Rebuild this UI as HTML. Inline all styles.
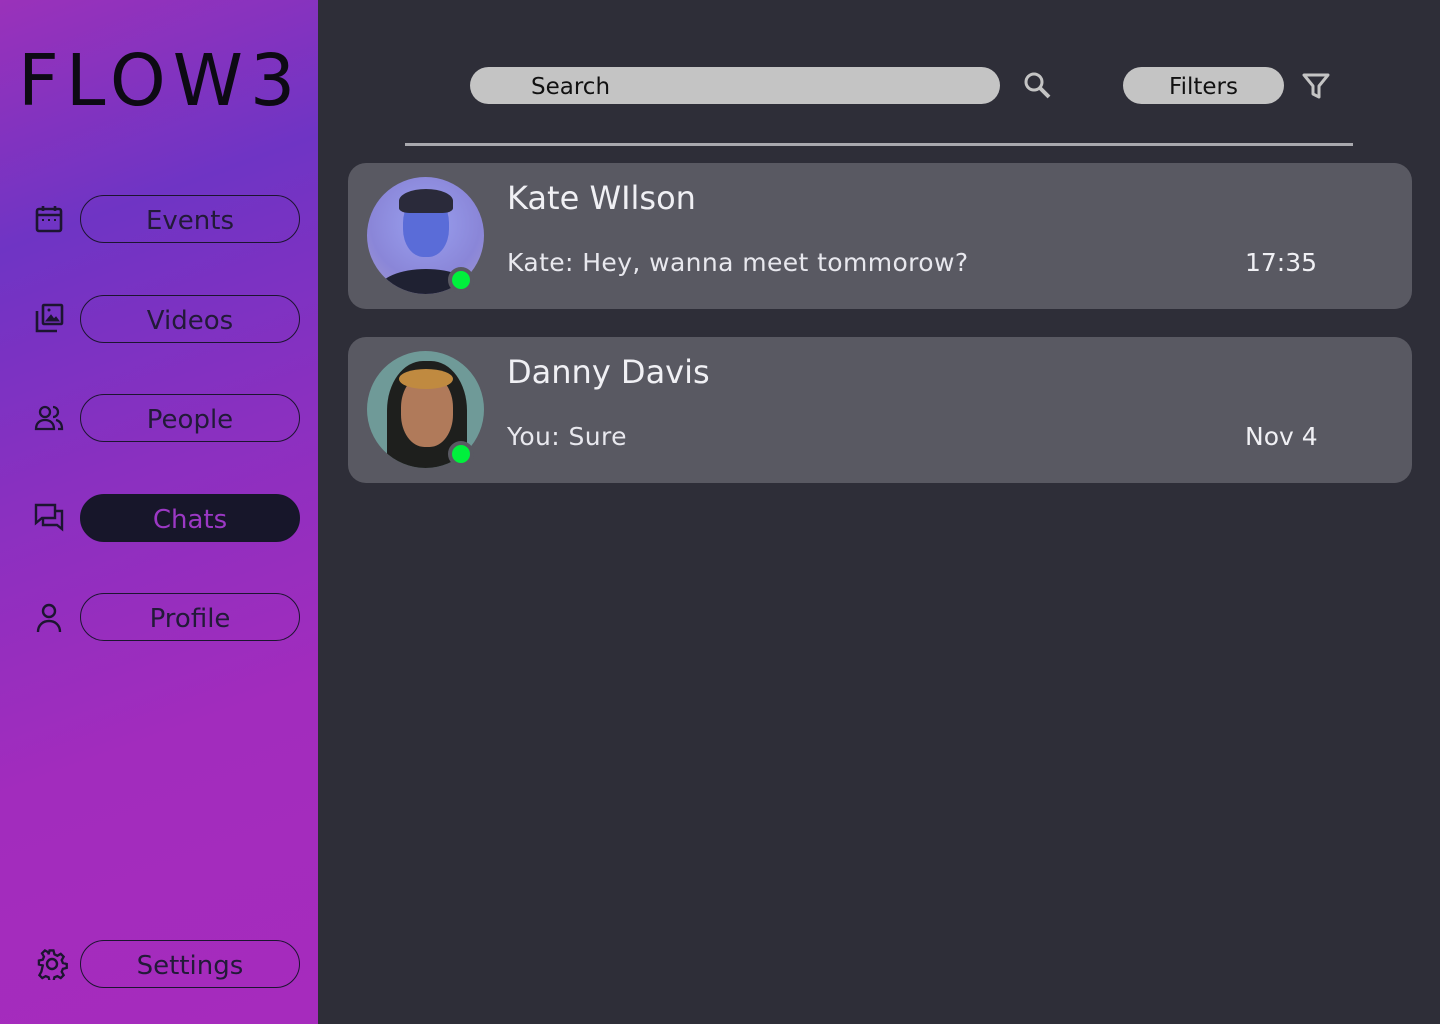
<!DOCTYPE html>
<html><head><style>
*{margin:0;padding:0;box-sizing:border-box}
body{width:1440px;height:1024px;background:#2e2e38;font-family:"DejaVu Sans","Liberation Sans",sans-serif;position:relative;overflow:hidden}
.side{position:absolute;left:0;top:0;width:318px;height:1024px;background:linear-gradient(160deg,#9a32ba 0%,#6f34c4 22%,#8a30c0 45%,#a22cbd 70%,#a62bbd 100%)}
.logo{position:absolute;left:18px;top:45px;font-size:71px;font-family:"DejaVu Sans",sans-serif;color:#0d0a14;letter-spacing:7px;line-height:1}
.btn{position:absolute;left:80px;width:220px;height:48px;border:1.5px solid #1c1530;border-radius:24px;text-align:center;line-height:50px;font-size:26px;color:#221a38}
.btn.on{background:#17162a;color:#9b38c4;border-color:#17162a}
.ic{position:absolute;left:33px;width:32px;height:32px}
.pill{position:absolute;top:67px;height:37px;background:#c4c4c4;border-radius:19px;font-size:23px;color:#111;line-height:40px}
.card{position:absolute;left:348px;width:1064px;height:146px;background:#595962;border-radius:18px}
.av{position:absolute;left:19px;top:14px;width:117px;height:117px;border-radius:50%;overflow:hidden}
.dot{position:absolute;left:100px;top:104px;width:26px;height:26px;border-radius:50%;background:#00f03c;border:4px solid #595962}
.nm{position:absolute;left:159px;top:16px;font-size:32px;color:#f0f0f4}
.msg{position:absolute;left:159px;top:85px;font-size:25px;color:#e8e8ee;letter-spacing:0.4px}
.tm{position:absolute;left:897px;top:85px;font-size:25px;color:#f0f0f4}
</style></head><body>
<div class="side">
<div class="logo">FLOW3</div>
<svg class="ic" style="top:203px" viewBox="0 0 32 32" fill="none" stroke="#1c1530" stroke-width="2.6"><rect x="4" y="6" width="24" height="22" rx="2"/><path d="M4 12h24M10 3v5M22 3v5"/><path d="M9 17h2M15 17h2M21 17h2" stroke-width="2"/></svg>
<div class="btn" style="top:195px">Events</div>
<svg class="ic" style="top:302px" viewBox="0 0 32 32" fill="none" stroke="#1c1530" stroke-width="2.6"><rect x="10" y="3" width="19" height="19" rx="1"/><path d="M4 9v20h20"/><path d="M13 19l5-6 3 4 2-2 3 4z" fill="#1c1530" stroke-width="1"/><circle cx="16" cy="8" r="1.5" fill="#1c1530" stroke="none"/></svg>
<div class="btn" style="top:295px">Videos</div>
<svg class="ic" style="top:402px" viewBox="0 0 32 32" fill="none" stroke="#1c1530" stroke-width="2.3"><circle cx="12" cy="10" r="5"/><path d="M3 27c0-6 4-9 9-9s9 3 9 9z"/><path d="M20 5a5 5 0 010 10M23 18c4 1 6 4 6 9h-4"/></svg>
<div class="btn" style="top:394px">People</div>
<svg class="ic" style="top:501px" viewBox="0 0 32 32" fill="none" stroke="#1c1530" stroke-width="2.4"><path d="M3 4h19v13H9l-6 5z"/><path d="M22 10h7v18l-5-4H10v-7"/></svg>
<div class="btn on" style="top:494px">Chats</div>
<svg class="ic" style="top:602px" viewBox="0 0 32 32" fill="none" stroke="#1c1530" stroke-width="2.4"><circle cx="16" cy="9" r="6"/><path d="M5 30c0-7 5-11 11-11s11 4 11 11"/></svg>
<div class="btn" style="top:593px">Profile</div>
<svg class="ic" style="top:948px;left:36px" viewBox="0 0 32 32" fill="none" stroke="#1c1530" stroke-width="2.4"><circle cx="16" cy="16" r="5"/><path d="M14 3h4l1 4 3 1.5 3.5-2 3 3-2 3.5 1.2 3 4 1v4l-4 1-1.2 3 2 3.5-3 3-3.5-2-3 1.2-1 4h-4l-1-4-3-1.2-3.5 2-3-3 2-3.5L7 18.5 3 17.5v-4l4-1 1.2-3-2-3.5 3-3 3.5 2L13 7z" transform="translate(0,-0.5) scale(0.97)"/></svg>
<div class="btn" style="top:940px">Settings</div>
</div>

<div class="pill" style="left:470px;width:530px;padding-left:61px">Search</div>
<svg style="position:absolute;left:1022px;top:70px" width="30" height="30" viewBox="0 0 30 30" fill="none" stroke="#c4c4c4" stroke-width="3"><circle cx="12" cy="12" r="8"/><path d="M18 18l9 9" stroke-width="4"/></svg>
<div class="pill" style="left:1123px;width:161px;text-align:center">Filters</div>
<svg style="position:absolute;left:1302px;top:72px" width="28" height="28" viewBox="0 0 28 28" fill="none" stroke="#c4c4c4" stroke-width="3" stroke-linejoin="round"><path d="M2 3h24l-9 11v11l-6-3v-8z"/></svg>
<div style="position:absolute;left:405px;top:143px;width:948px;height:3px;background:#a9a9ae"></div>

<div class="card" style="top:163px">
<div class="av" style="background:radial-gradient(circle at 50% 40%,#9aa0f0,#8a86d8 60%,#a59ad0)">
<div style="position:absolute;left:36px;top:18px;width:46px;height:62px;border-radius:45%;background:#5a6cd8"></div>
<div style="position:absolute;left:32px;top:12px;width:54px;height:24px;border-radius:50% 50% 20% 20%;background:#2a2a3a"></div>
<div style="position:absolute;left:12px;top:92px;width:94px;height:40px;border-radius:50%;background:#1f2132"></div>
</div>
<div class="dot"></div>
<div class="nm">Kate WIlson</div>
<div class="msg">Kate: Hey, wanna meet tommorow?</div>
<div class="tm">17:35</div>
</div>

<div class="card" style="top:337px">
<div class="av" style="background:#6f9a98">
<div style="position:absolute;left:20px;top:10px;width:80px;height:110px;border-radius:45% 45% 10% 10%;background:#1e1f1d"></div>
<div style="position:absolute;left:34px;top:24px;width:52px;height:72px;border-radius:45%;background:#b07a5a"></div>
<div style="position:absolute;left:32px;top:18px;width:54px;height:20px;border-radius:50%;background:#c08a40"></div>
</div>
<div class="dot"></div>
<div class="nm">Danny Davis</div>
<div class="msg">You: Sure</div>
<div class="tm">Nov 4</div>
</div>
</body></html>
